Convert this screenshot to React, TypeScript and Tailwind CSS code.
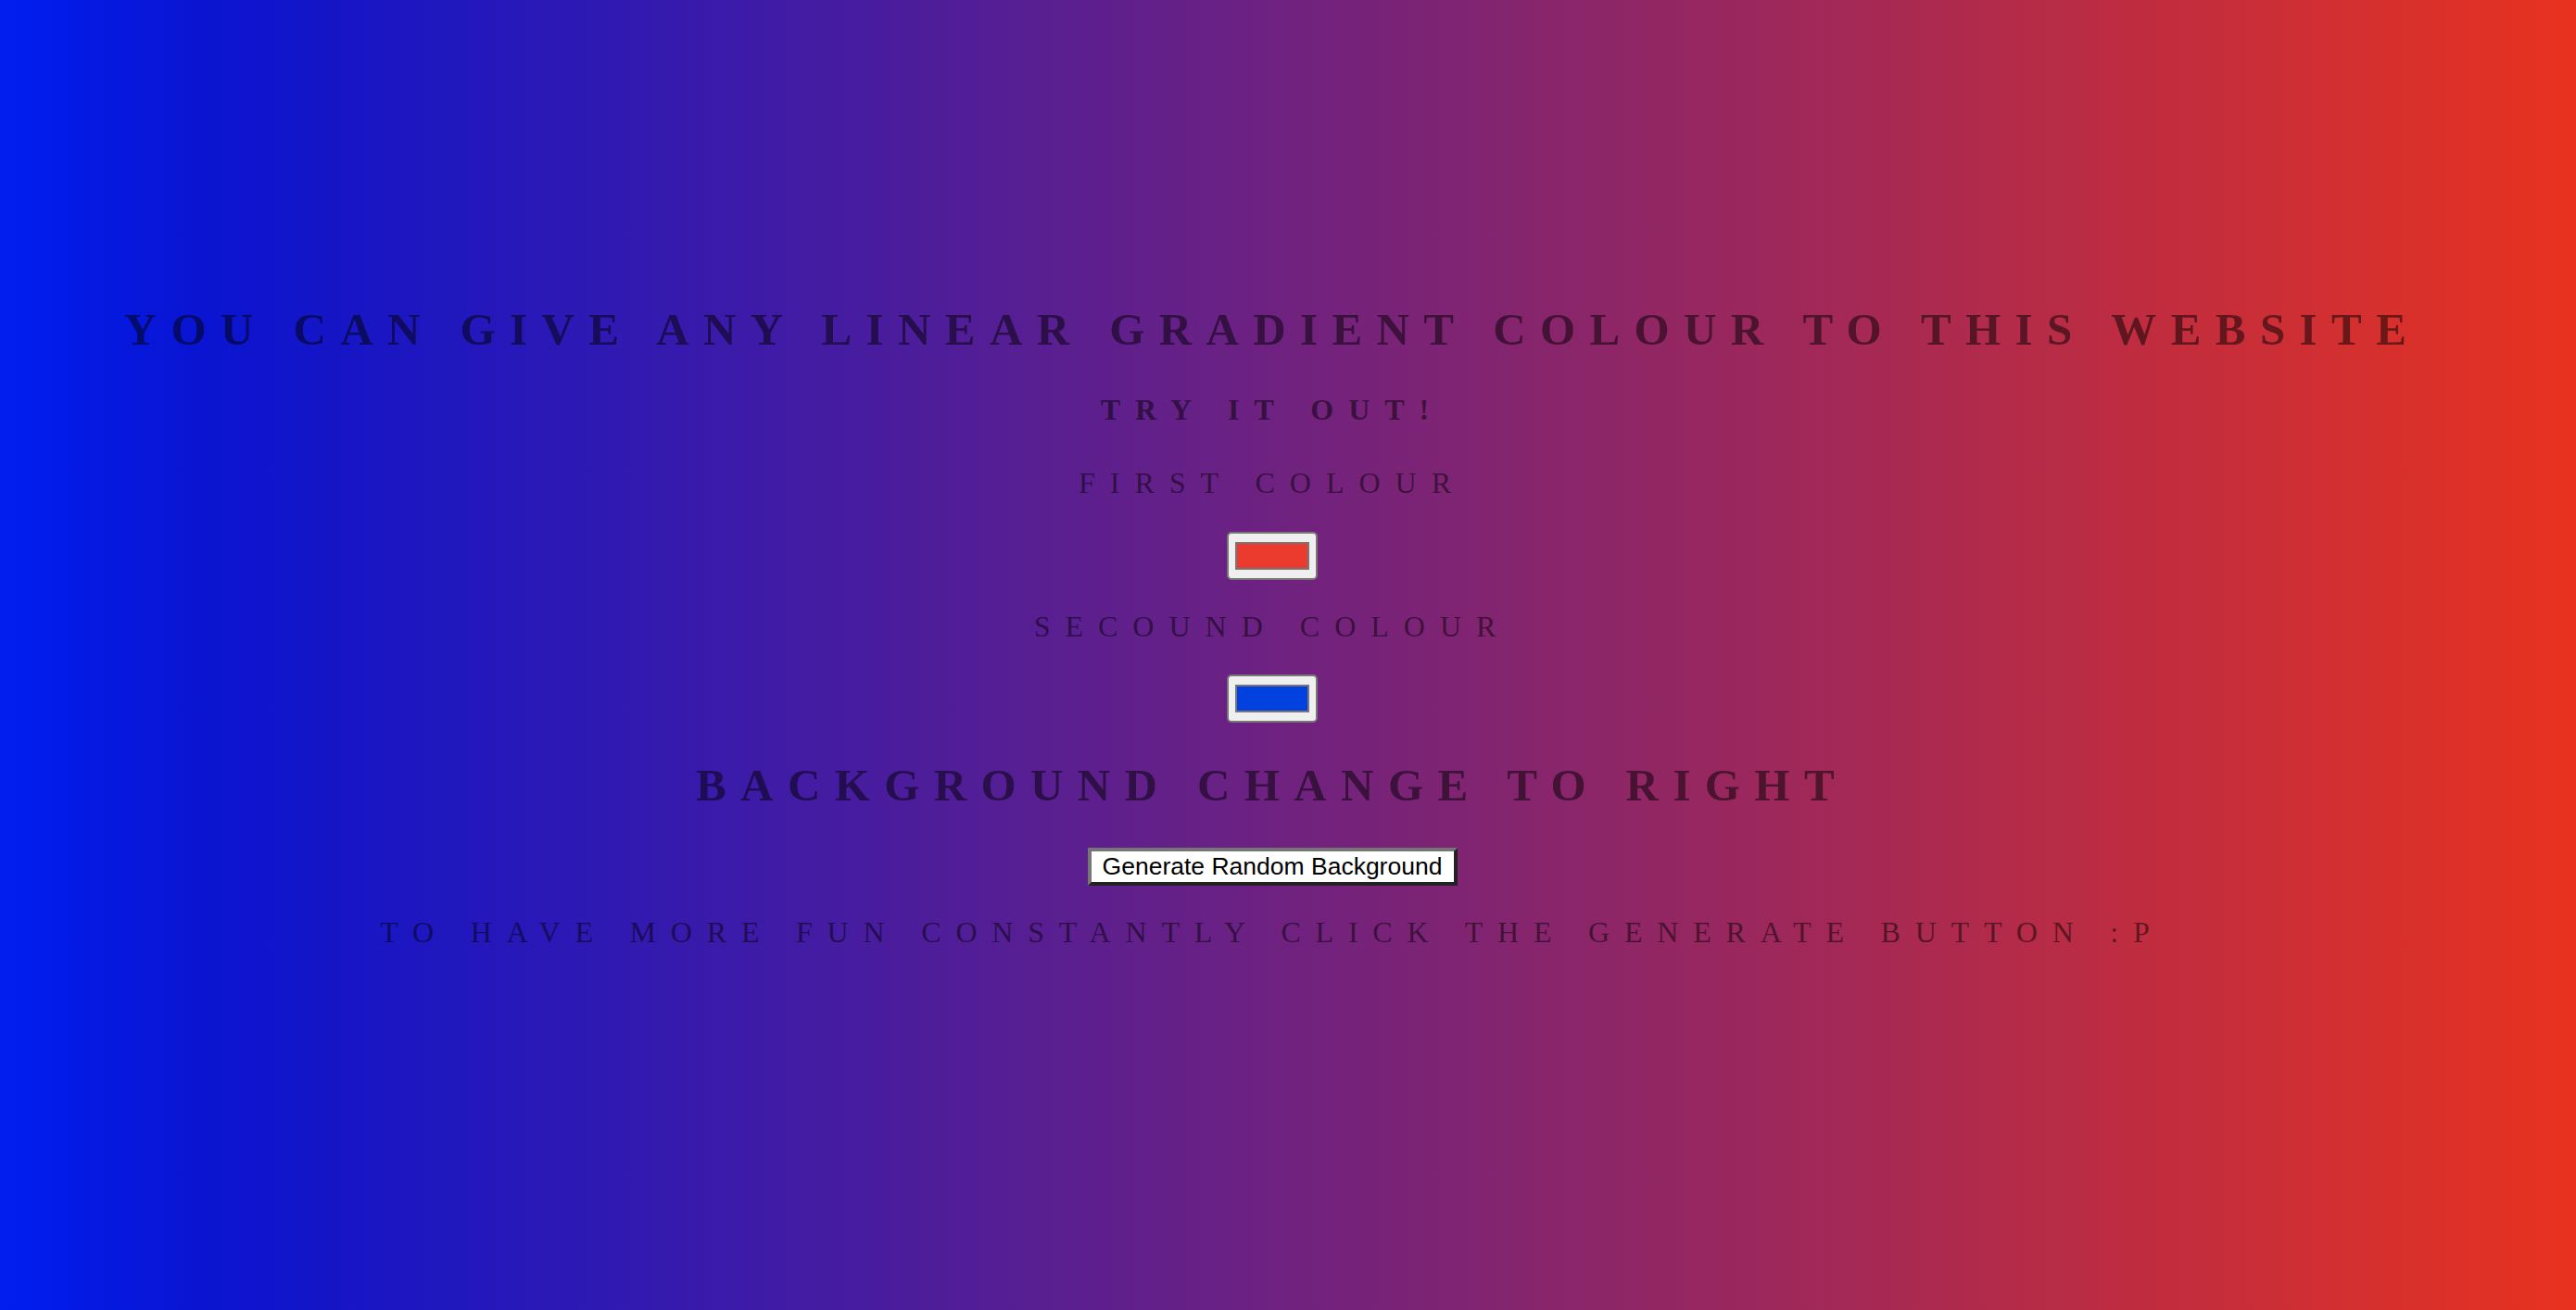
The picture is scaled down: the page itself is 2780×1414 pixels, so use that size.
import React from "react";

export default function App() {
  return (
    <div className="min-h-screen w-full bg-[linear-gradient(to_right,#001ef0_0%,#0a14d0_8%,#e8321f_100%)] font-['Liberation_Serif',serif] text-black/50 uppercase tracking-[16px]">
      <div className="flex flex-col items-center pr-[34px] pt-[331px] text-center">
        <h1 className="m-0 text-[49px] leading-[49px] font-bold tracking-[15.4px] whitespace-nowrap">
          You can give any linear gradient colour to this website
        </h1>
        <h3 className="mt-[46px] text-[32px] leading-[32px] font-bold whitespace-nowrap">
          Try it out!
        </h3>
        <div className="mt-[47px] text-[32px] leading-[32px] whitespace-nowrap">
          First colour
        </div>
        <div className="mt-[37px] flex h-[52px] w-[98px] items-center justify-center rounded-[5px] border-2 border-[#767676] bg-[#efefef]">
          <div className="h-[30px] w-[80px] border-2 border-[#777777] bg-[#ea3b2e]" />
        </div>
        <div className="mt-[34px] text-[32px] leading-[32px] whitespace-nowrap">
          Secound colour
        </div>
        <div className="mt-[36px] flex h-[52px] w-[98px] items-center justify-center rounded-[5px] border-2 border-[#767676] bg-[#efefef]">
          <div className="h-[30px] w-[80px] border-2 border-[#777777] bg-[#0041e0]" />
        </div>
        <h2 className="mt-[43px] text-[49px] leading-[49px] font-bold tracking-[15.4px] whitespace-nowrap">
          Background change to right
        </h2>
        <button className="mt-[43px] h-[41px] w-[399px] border-4 border-t-[#767676] border-l-[#767676] border-b-[#222222] border-r-[#222222] bg-white px-[8px] font-['Liberation_Sans',Arial,sans-serif] text-[26.5px] leading-[33px] tracking-normal normal-case text-black whitespace-nowrap">
          Generate Random Background
        </button>
        <div className="mt-[34px] text-[32px] leading-[32px] tracking-[15.8px] whitespace-nowrap">
          To have more fun constantly click the generate button :P
        </div>
      </div>
    </div>
  );
}
